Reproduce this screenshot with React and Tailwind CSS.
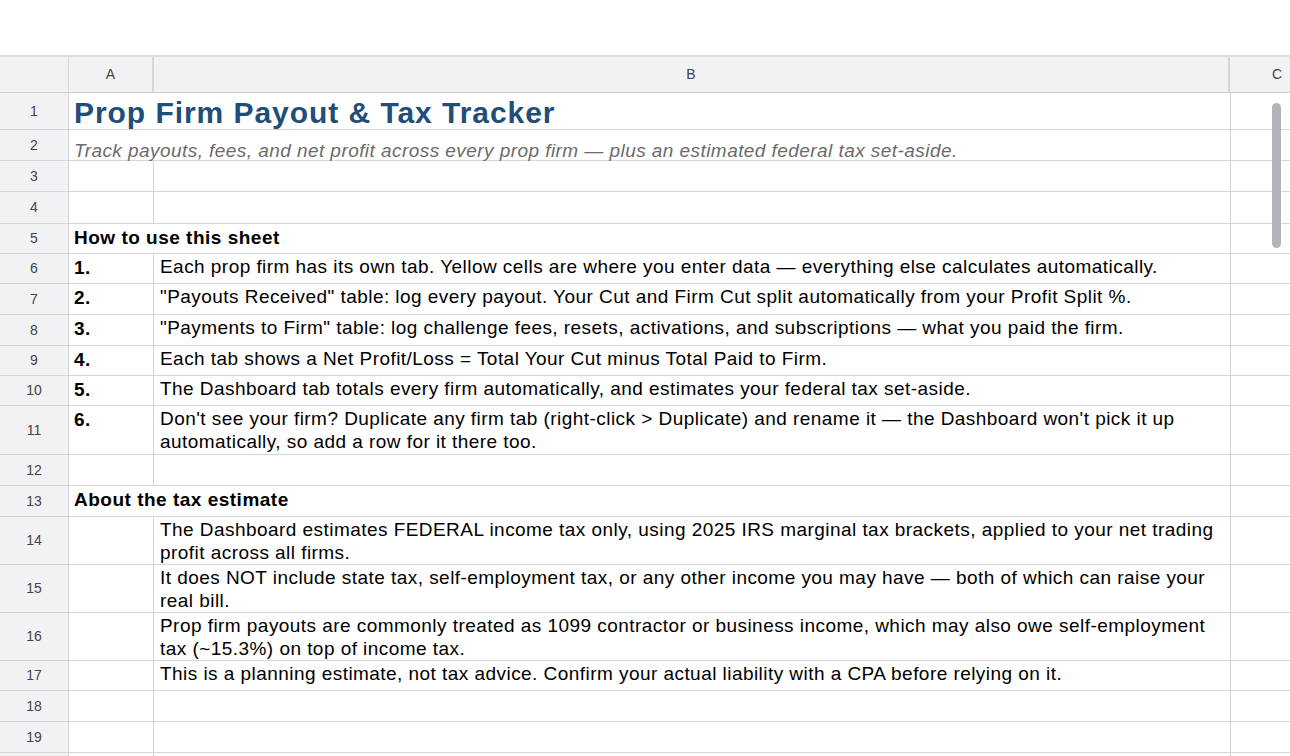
import React from "react";

const font = { fontFamily: '"Liberation Sans", Arial, sans-serif' };

// row number, height (incl. bottom border), and cell content
const rows = [
  { n: 1, h: "h-[37px]", span: true, kind: "title", text: "Prop Firm Payout & Tax Tracker" },
  { n: 2, h: "h-[31px]", span: true, kind: "subtitle", text: "Track payouts, fees, and net profit across every prop firm — plus an estimated federal tax set-aside." },
  { n: 3, h: "h-[31px]" },
  { n: 4, h: "h-[32px]" },
  { n: 5, h: "h-[30px]", span: true, kind: "section", text: "How to use this sheet" },
  { n: 6, h: "h-[30px]", a: "1.", b: "Each prop firm has its own tab. Yellow cells are where you enter data — everything else calculates automatically." },
  { n: 7, h: "h-[31px]", a: "2.", b: "\"Payouts Received\" table: log every payout. Your Cut and Firm Cut split automatically from your Profit Split %." },
  { n: 8, h: "h-[31px]", a: "3.", b: "\"Payments to Firm\" table: log challenge fees, resets, activations, and subscriptions — what you paid the firm." },
  { n: 9, h: "h-[30px]", a: "4.", b: "Each tab shows a Net Profit/Loss = Total Your Cut minus Total Paid to Firm." },
  { n: 10, h: "h-[30px]", a: "5.", b: "The Dashboard tab totals every firm automatically, and estimates your federal tax set-aside." },
  { n: 11, h: "h-[49px]", a: "6.", b: "Don't see your firm? Duplicate any firm tab (right-click > Duplicate) and rename it — the Dashboard won't pick it up automatically, so add a row for it there too." },
  { n: 12, h: "h-[31px]" },
  { n: 13, h: "h-[31px]", span: true, kind: "section", text: "About the tax estimate" },
  { n: 14, h: "h-[48px]", b: "The Dashboard estimates FEDERAL income tax only, using 2025 IRS marginal tax brackets, applied to your net trading profit across all firms." },
  { n: 15, h: "h-[48px]", b: "It does NOT include state tax, self-employment tax, or any other income you may have — both of which can raise your real bill." },
  { n: 16, h: "h-[48px]", b: "Prop firm payouts are commonly treated as 1099 contractor or business income, which may also owe self-employment tax (~15.3%) on top of income tax." },
  { n: 17, h: "h-[30px]", b: "This is a planning estimate, not tax advice. Confirm your actual liability with a CPA before relying on it." },
  { n: 18, h: "h-[31px]" },
  { n: 19, h: "h-[31px]" },
  { n: "", h: "h-[31px]" },
];

function SpanCell({ row }) {
  if (row.kind === "title") {
    return (
      <div className="w-[1162px] shrink-0 border-r border-[#d6d5da] flex items-end pl-[5px]">
        <span className="text-[30px] leading-[32px] tracking-[0.95px] font-bold text-[#1f4e79] whitespace-nowrap">{row.text}</span>
      </div>
    );
  }
  if (row.kind === "subtitle") {
    return (
      <div className="w-[1162px] shrink-0 border-r border-[#d6d5da] flex items-end pl-[5px]">
        <span className="text-[19px] leading-[18px] tracking-[0.44px] italic text-[#6b6b6b] whitespace-nowrap">{row.text}</span>
      </div>
    );
  }
  return (
    <div className="w-[1162px] shrink-0 border-r border-[#d6d5da] pl-[5px] pt-[2px]">
      <span className="text-[19px] leading-[23px] tracking-[0.5px] font-bold text-black whitespace-nowrap">{row.text}</span>
    </div>
  );
}

function Row({ row }) {
  return (
    <div className={`flex ${row.h} border-b border-[#d6d5da]`}>
      <div className="w-[69px] shrink-0 bg-[#f2f1f4] border-r border-[#d6d5da] flex items-center justify-center text-[14px] text-[#444]">
        {row.n}
      </div>
      {row.span ? (
        <SpanCell row={row} />
      ) : (
        <>
          <div className="w-[85px] shrink-0 border-r border-[#d6d5da] pl-[5px] pt-[2px] text-[19px] leading-[23px] tracking-[0.5px] font-bold text-black">
            {row.a}
          </div>
          <div className="w-[1077px] shrink-0 border-r border-[#d6d5da] pl-[6px] pr-[3px] pt-[2px] text-[19px] leading-[22.5px] tracking-[0.45px] text-black">
            {row.b}
          </div>
        </>
      )}
      <div className="w-[94px] shrink-0" />
    </div>
  );
}

export default function App() {
  return (
    <div className="relative h-[756px] w-[1290px] overflow-hidden bg-white pt-[55px]" style={font}>
      <div className="border-t-2 border-[#dddde0]">
        {/* column headers */}
        <div className="flex h-[36px] bg-[#f2f1f4] border-b border-[#d0cfd4] text-[14px] text-[#444]">
          <div className="w-[69px] shrink-0 border-r border-[#d6d5da]" />
          <div className="w-[85px] shrink-0 border-r-2 border-[#d6d5da] flex items-center justify-center">A</div>
          <div className="w-[1076px] shrink-0 border-r-2 border-[#d6d5da] flex items-center justify-center">B</div>
          <div className="w-[94px] shrink-0 flex items-center justify-center">C</div>
        </div>
        {rows.map((row, i) => (
          <Row key={i} row={row} />
        ))}
      </div>

      {/* vertical scrollbar thumb */}
      <div className="absolute left-[1272px] top-[103px] h-[145px] w-[9px] rounded-full bg-[#b4b3b8]" />
    </div>
  );
}
